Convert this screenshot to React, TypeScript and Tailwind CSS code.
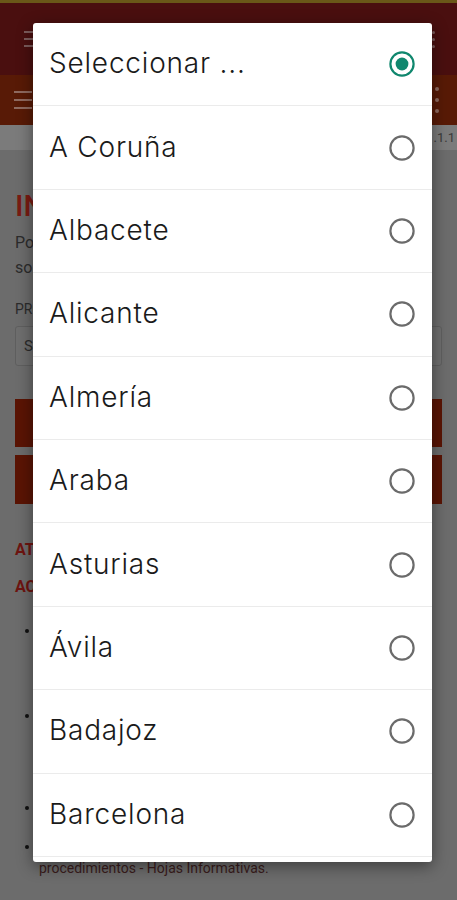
import React from "react";

const items = [
  "Seleccionar ...",
  "A Coruña",
  "Albacete",
  "Alicante",
  "Almería",
  "Araba",
  "Asturias",
  "Ávila",
  "Badajoz",
  "Barcelona",
  "Bizkaia",
];

function Radio({ checked }: { checked: boolean }) {
  return (
    <svg width="28" height="28" viewBox="0 0 28 28" className="shrink-0">
      <circle
        cx="14"
        cy="14"
        r="11.6"
        fill="none"
        stroke={checked ? "#10876e" : "#6b6b6b"}
        strokeWidth="2.2"
      />
      {checked && <circle cx="14" cy="14" r="6.4" fill="#10876e" />}
    </svg>
  );
}

function Bullet({ children, className }: { children: React.ReactNode; className?: string }) {
  return (
    <li className={`flex gap-[10px] ${className ?? ""}`}>
      <span className="mt-[8px] h-[4px] w-[4px] shrink-0 rounded-full bg-[#111]" />
      <span>{children}</span>
    </li>
  );
}

export default function App() {
  return (
    <div
      className="relative h-[900px] w-[457px] overflow-hidden bg-[#6c6c6c]"
      style={{ fontFamily: "Roboto, 'Noto Sans', sans-serif" }}
    >
      {/* dimmed page behind the dialog */}
      <div className="h-[3px] bg-[#6a5818]" />
      <div className="flex h-[72px] items-center justify-between bg-[#4a0f0f] pl-[24px] pr-[22px]">
        <div className="flex flex-col gap-[5px]">
          <div className="h-[2px] w-[14px] bg-[#7d5c5c]" />
          <div className="h-[2px] w-[14px] bg-[#7d5c5c]" />
          <div className="h-[2px] w-[14px] bg-[#7d5c5c]" />
        </div>
        <div className="flex flex-col gap-[4px]">
          <div className="h-[3px] w-[3px] rounded-full bg-[#7d5c5c]" />
          <div className="h-[3px] w-[3px] rounded-full bg-[#7d5c5c]" />
          <div className="h-[3px] w-[3px] rounded-full bg-[#7d5c5c]" />
        </div>
      </div>
      <div className="flex h-[50px] items-center justify-between bg-[#581a06] pl-[14px] pr-[18px]">
        <div className="flex flex-col gap-[6px]">
          <div className="h-[2px] w-[18px] bg-[#8f6a60]" />
          <div className="h-[2px] w-[18px] bg-[#8f6a60]" />
          <div className="h-[2px] w-[18px] bg-[#8f6a60]" />
        </div>
        <div className="flex flex-col gap-[7px]">
          <div className="h-[4px] w-[4px] rounded-full bg-[#8f6a60]" />
          <div className="h-[4px] w-[4px] rounded-full bg-[#8f6a60]" />
          <div className="h-[4px] w-[4px] rounded-full bg-[#8f6a60]" />
        </div>
      </div>
      <div className="flex h-[25px] items-center justify-end bg-[#7b7b7b] pr-[2px] text-[13px] text-[#3a3a3a]">
        v.1.1.1
      </div>

      <div className="px-[15px] pt-[38px]">
        <div className="text-[30px] font-medium leading-[36px] text-[#7a1b12]">
          INFORMACIÓN
        </div>
        <p className="mt-[6px] text-[16px] leading-[25px] text-[#2b2b2b]">
          Por favor, seleccione la provincia
          <br />
          solicitada.
        </p>
        <div className="mt-[20px] text-[14px] leading-[18px] text-[#2b2b2b]">
          PROVINCIA
        </div>
        <div className="mt-[8px] flex h-[40px] items-center justify-between rounded-[3px] border border-[#5f5f5f] bg-[#6e6e6e] px-[8px] text-[15px] text-[#2b2b2b]">
          <span>Seleccionar ...</span>
          <svg width="16" height="16" viewBox="0 0 16 16">
            <path d="M3 6l5 5 5-5" fill="none" stroke="#555" strokeWidth="1.5" />
          </svg>
        </div>
        <div className="mt-[33px] h-[48px] bg-[#5a1404]" />
        <div className="mt-[8px] h-[49px] bg-[#5a1404]" />
        <div className="mt-[27px] text-[16px] font-bold leading-[37px] text-[#6e1410]">
          ATENCIÓN
          <br />
          ACCESO
        </div>
        <ul className="mt-[16px] pl-[10px] text-[14px] leading-[21px] text-[#2b2b2b]">
          <Bullet>Cita</Bullet>
          <Bullet className="mt-[64px]">Cita</Bullet>
          <Bullet className="mt-[71px]">Cita</Bullet>
          <Bullet className="mt-[18px] text-[#3a1c1c]">
            Información
            <br />
            procedimientos - Hojas Informativas.
          </Bullet>
        </ul>
      </div>

      {/* dialog */}
      <div className="absolute left-[33px] top-[23px] h-[839px] w-[399px] overflow-hidden rounded-[3px] bg-white shadow-[0_4px_16px_rgba(0,0,0,0.45)]">
        <div className="flex flex-col">
          {items.map((it, i) => (
            <div
              key={it}
              className="flex h-[83.4px] shrink-0 items-center justify-between border-b-[1.5px] border-[#ebebeb] pl-[16px] pr-[16px]"
            >
              <span
                className="pb-[2px] text-[28px] font-light tracking-[0.8px] text-[#1a1a1a]"
                style={{ fontFamily: "Inter, 'Open Sans', sans-serif" }}
              >
                {it}
              </span>
              <Radio checked={i === 0} />
            </div>
          ))}
        </div>
      </div>
    </div>
  );
}
